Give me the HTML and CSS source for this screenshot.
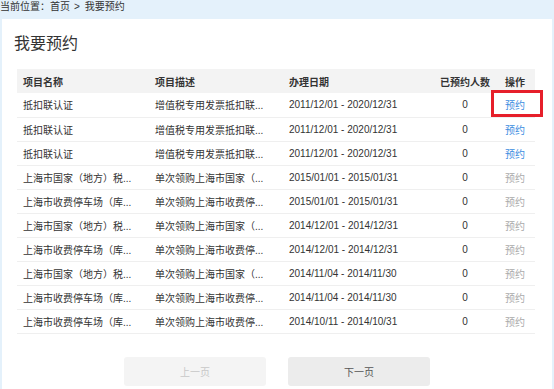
FILE: index.html
```html
<!DOCTYPE html>
<html lang="zh-CN">
<head>
  <meta charset="UTF-8">
  <meta name="viewport" content="width=device-width, initial-scale=1.0">
  <title>我要预约</title>
  <link rel="stylesheet" href="styles.css">
</head>
<body>
  <div class="crumb">当前位置：首页<span class="sep">&gt;</span>我要预约</div>
  <div class="panel">
    <h1>我要预约</h1>
    <table>
      <colgroup>
        <col class="c-name">
        <col class="c-desc">
        <col class="c-date">
        <col class="c-num">
        <col class="c-op">
      </colgroup>
      <thead>
        <tr>
          <th>项目名称</th>
          <th>项目描述</th>
          <th>办理日期</th>
          <th class="num">已预约人数</th>
          <th class="op">操作</th>
        </tr>
      </thead>
      <tbody>
        <tr>
          <td>抵扣联认证</td>
          <td>增值税专用发票抵扣联...</td>
          <td>2011/12/01 - 2020/12/31</td>
          <td class="num">0</td>
          <td class="op"><a href="#" class="link">预约</a><span class="mark"></span></td>
        </tr>
        <tr>
          <td>抵扣联认证</td>
          <td>增值税专用发票抵扣联...</td>
          <td>2011/12/01 - 2020/12/31</td>
          <td class="num">0</td>
          <td class="op"><a href="#" class="link">预约</a></td>
        </tr>
        <tr>
          <td>抵扣联认证</td>
          <td>增值税专用发票抵扣联...</td>
          <td>2011/12/01 - 2020/12/31</td>
          <td class="num">0</td>
          <td class="op"><a href="#" class="link">预约</a></td>
        </tr>
        <tr>
          <td>上海市国家（地方）税...</td>
          <td>单次领购上海市国家（...</td>
          <td>2015/01/01 - 2015/01/31</td>
          <td class="num">0</td>
          <td class="op"><span class="off">预约</span></td>
        </tr>
        <tr>
          <td>上海市收费停车场（库...</td>
          <td>单次领购上海市收费停...</td>
          <td>2015/01/01 - 2015/01/31</td>
          <td class="num">0</td>
          <td class="op"><span class="off">预约</span></td>
        </tr>
        <tr>
          <td>上海市国家（地方）税...</td>
          <td>单次领购上海市国家（...</td>
          <td>2014/12/01 - 2014/12/31</td>
          <td class="num">0</td>
          <td class="op"><span class="off">预约</span></td>
        </tr>
        <tr>
          <td>上海市收费停车场（库...</td>
          <td>单次领购上海市收费停...</td>
          <td>2014/12/01 - 2014/12/31</td>
          <td class="num">0</td>
          <td class="op"><span class="off">预约</span></td>
        </tr>
        <tr>
          <td>上海市国家（地方）税...</td>
          <td>单次领购上海市国家（...</td>
          <td>2014/11/04 - 2014/11/30</td>
          <td class="num">0</td>
          <td class="op"><span class="off">预约</span></td>
        </tr>
        <tr>
          <td>上海市收费停车场（库...</td>
          <td>单次领购上海市收费停...</td>
          <td>2014/11/04 - 2014/11/30</td>
          <td class="num">0</td>
          <td class="op"><span class="off">预约</span></td>
        </tr>
        <tr>
          <td>上海市收费停车场（库...</td>
          <td>单次领购上海市收费停...</td>
          <td>2014/10/11 - 2014/10/31</td>
          <td class="num">0</td>
          <td class="op"><span class="off">预约</span></td>
        </tr>
      </tbody>
    </table>
    <div class="pager">
      <button class="btn disabled">上一页</button>
      <button class="btn">下一页</button>
    </div>
  </div>
</body>
</html>
```

FILE: styles.css
```css
* {
  box-sizing: border-box;
}

html, body {
  height: 100%;
}

body {
  margin: 0;
  background-color: #e4f1fb;
  font-family: "Liberation Sans", "Noto Sans CJK SC", sans-serif;
  font-size: 10px;
  color: #333;
  display: flex;
  flex-direction: column;
}

.crumb {
  height: 19px;
  line-height: 14px;
  color: #333;
}

.crumb .sep {
  display: inline-block;
  padding: 0 5px 0 4px;
}

.panel {
  flex: 1;
  margin: 0 2px;
  background-color: #fff;
  padding: 13px 0 0 12px;
}

h1 {
  margin: 0;
  font-size: 16px;
  font-weight: normal;
  line-height: 24px;
  height: 37px;
  color: #333;
}

table {
  width: 518px;
  margin-left: 3px;
  border-collapse: collapse;
  table-layout: fixed;
}

.c-name { width: 132px; }
.c-desc { width: 134px; }
.c-date { width: 157px; }
.c-num { width: 50px; }
.c-op { width: 45px; }

th, td {
  height: 24px;
  padding: 0 0 0 6px;
  text-align: left;
  white-space: nowrap;
  overflow: hidden;
  border-bottom: 1px solid #efefef;
}

th {
  background-color: #f3f3f3;
  font-weight: bold;
  border-bottom: none;
}

th.num, td.num {
  text-align: center;
  padding: 0;
  overflow: visible;
}

th.op, td.op {
  padding-left: 15px;
}

td.op {
  position: relative;
  overflow: visible;
}

.link {
  color: #3c8ddf;
  text-decoration: none;
}

.off {
  color: #aaa;
}

.mark {
  position: absolute;
  left: 1px;
  top: -3px;
  width: 52px;
  height: 27px;
  border: 3px solid #e61f2a;
}

.pager {
  display: flex;
  gap: 22px;
  margin: 23px 0 0 110px;
}

.btn {
  width: 142px;
  height: 29px;
  border: none;
  border-radius: 3px;
  background-color: #ececec;
  color: #555;
  font-family: inherit;
  font-size: 10px;
}

.btn.disabled {
  background-color: #f4f4f4;
  color: #c8c8c8;
}
```
